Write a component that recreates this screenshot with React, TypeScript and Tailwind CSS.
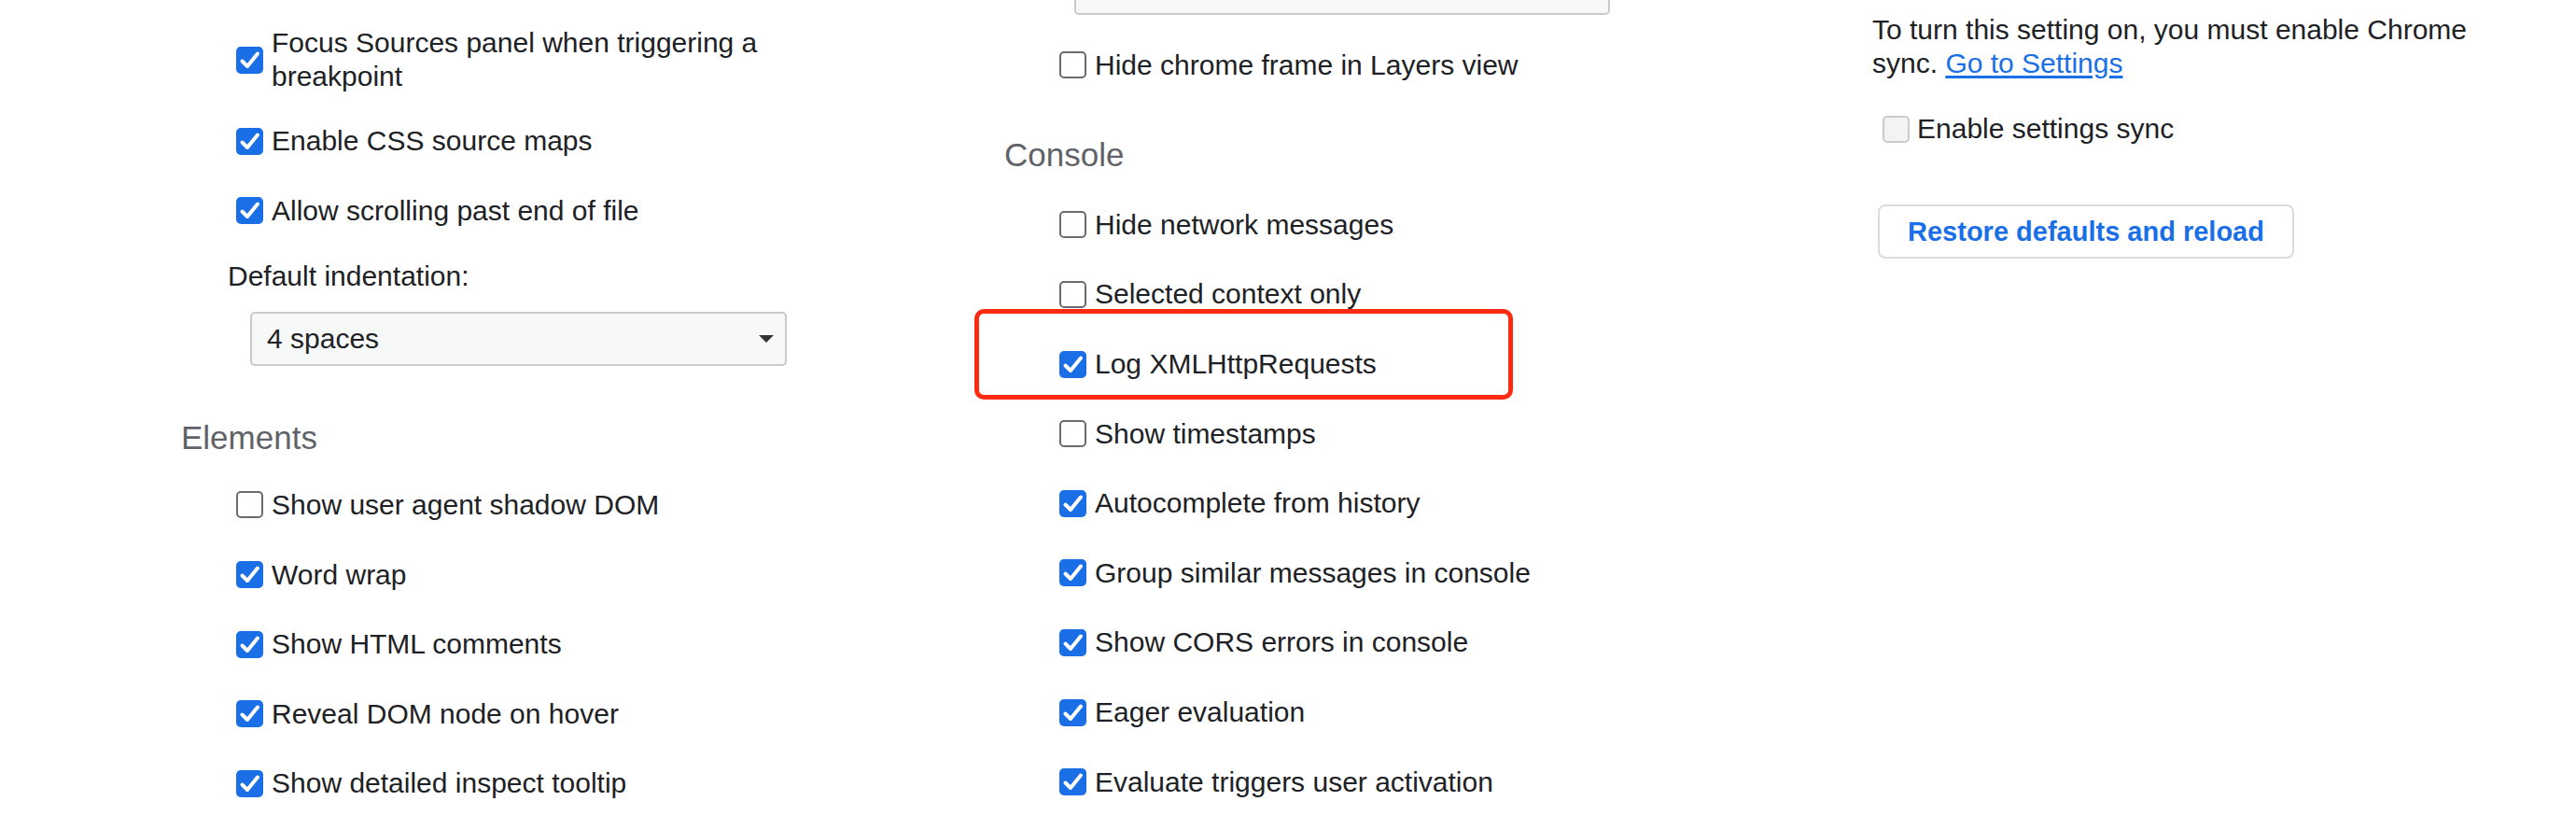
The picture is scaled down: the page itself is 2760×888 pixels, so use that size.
import React from "react";

type BoxProps = { state: "on" | "off" | "disabled" };

function Box({ state }: BoxProps) {
  if (state === "on") {
    return (
      <span className="flex h-[29px] w-[29px] shrink-0 items-center justify-center rounded-[5px] bg-[#1a6fe6]">
        <svg viewBox="0 0 29 29" className="h-[29px] w-[29px]">
          <path d="M6.5 15.5 L12 21 L23 7.5" stroke="white" strokeWidth="4" fill="none" strokeLinecap="round" strokeLinejoin="round" />
        </svg>
      </span>
    );
  }
  if (state === "disabled") {
    return <span className="h-[29px] w-[29px] shrink-0 rounded-[5px] border-2 border-[#cbcbcb] bg-[#f3f3f3]" />;
  }
  return <span className="h-[29px] w-[29px] shrink-0 rounded-[5px] border-[2.5px] border-[#6b6b6b] bg-white" />;
}

function Row({ label, on, children }: { label: string; on?: boolean; children?: React.ReactNode }) {
  return (
    <div className="relative flex h-[74.6px] items-center gap-[9px] pl-[59px]">
      <Box state={on ? "on" : "off"} />
      <span>{label}</span>
      {children}
    </div>
  );
}

function Select({ value, cls }: { value?: string; cls: string }) {
  return (
    <div className={`flex h-[58px] items-center justify-between rounded-[5px] border-2 border-[#cacaca] bg-[#f7f8f8] pl-[16px] pr-[12px] ${cls}`}>
      {value ? <span>{value}</span> : <span />}
      {value && (
        <svg viewBox="0 0 16 8" className="h-[8px] w-[16px]">
          <path d="M0 0 L16 0 L8 8 Z" fill="#333" />
        </svg>
      )}
    </div>
  );
}

const elements = [
  { label: "Show user agent shadow DOM", on: false },
  { label: "Word wrap", on: true },
  { label: "Show HTML comments", on: true },
  { label: "Reveal DOM node on hover", on: true },
  { label: "Show detailed inspect tooltip", on: true },
];

const consoleRows = [
  { label: "Hide network messages", on: false },
  { label: "Selected context only", on: false },
  { label: "Log XMLHttpRequests", on: true, mark: true },
  { label: "Show timestamps", on: false },
  { label: "Autocomplete from history", on: true },
  { label: "Group similar messages in console", on: true },
  { label: "Show CORS errors in console", on: true },
  { label: "Eager evaluation", on: true },
  { label: "Evaluate triggers user activation", on: true },
];

export default function App() {
  return (
    <div className="h-[888px] w-[2760px] overflow-hidden bg-white font-['Liberation_Sans',Arial,Helvetica,sans-serif] text-[30px] leading-[36px] text-[#202124]">
      <div className="grid grid-cols-[1076px_930px_1fr]">
        {/* sources + elements */}
        <div className="flex flex-col pl-[194px]">
          <div className="flex h-[114px] items-center gap-[9px] pl-[59px] pt-[14px]">
            <Box state="on" />
            <span className="max-w-[560px]">Focus Sources panel when triggering a breakpoint</span>
          </div>
          <Row label="Enable CSS source maps" on />
          <Row label="Allow scrolling past end of file" on />
          <div className="mt-[15px] pl-[50px]">Default indentation:</div>
          <Select value="4 spaces" cls="ml-[74px] mt-[20px] w-[575px]" />
          <h2 className="mt-[56px] text-[35px] leading-[42px] text-[#5f6368]">Elements</h2>
          <div className="mt-[13.5px]">
            {elements.map((r) => (
              <Row key={r.label} label={r.label} on={r.on} />
            ))}
          </div>
        </div>

        {/* layers + console */}
        <div className="flex flex-col">
          <Select cls="-mt-[42px] ml-[75px] w-[574px]" />
          <div className="mt-[16.5px]">
            <Row label="Hide chrome frame in Layers view" />
          </div>
          <h2 className="mt-[37.5px] text-[35px] leading-[42px] text-[#5f6368]">Console</h2>
          <div className="mt-[17px]">
            {consoleRows.map((r) => (
              <Row key={r.label} label={r.label} on={r.on}>
                {r.mark && (
                  <div className="absolute -top-[22px] left-[-32px] h-[97px] w-[577px] rounded-[10px] border-[5px] border-[#fe2b12]" />
                )}
              </Row>
            ))}
          </div>
        </div>

        {/* sync */}
        <div className="flex flex-col pt-[14px]">
          <p className="max-w-[690px]">
            <span>To turn this setting on, you must enable Chrome</span>{" "}
            <span>sync.</span>{" "}
            <span className="text-[#1a6fe6] underline underline-offset-[3px]">Go to Settings</span>
          </p>
          <div className="mt-[34px] flex h-[36px] items-center gap-[8px] pl-[11px]">
            <Box state="disabled" />
            <span>Enable settings sync</span>
          </div>
          <button className="ml-[6px] mt-[63px] h-[58px] w-[446px] rounded-[8px] border-2 border-[#dadce0] bg-white text-[29px] font-semibold text-[#1a6fe6]">
            Restore defaults and reload
          </button>
        </div>
      </div>
    </div>
  );
}
